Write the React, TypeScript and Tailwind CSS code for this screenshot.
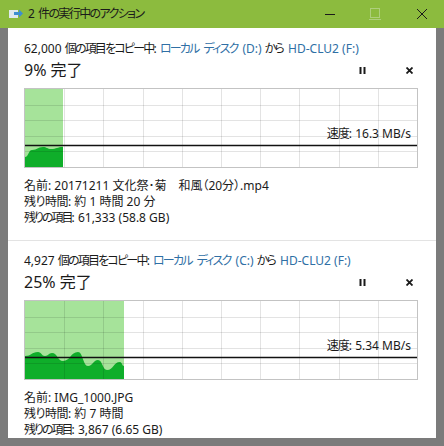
import React from "react";

type Pt = [number, number];

function smoothPath(pts: Pt[], bottom: number): string {
  let d = `M ${pts[0][0]} ${bottom} L ${pts[0][0]} ${pts[0][1]}`;
  for (let i = 0; i < pts.length - 1; i++) {
    const [x0, y0] = pts[i];
    const [x1, y1] = pts[i + 1];
    const mx = (x0 + x1) / 2;
    d += ` C ${mx} ${y0}, ${mx} ${y1}, ${x1} ${y1}`;
  }
  d += ` L ${pts[pts.length - 1][0]} ${bottom} Z`;
  return d;
}

function Chart({ fill, wave, speed }: { fill: number; wave: Pt[]; speed: string }) {
  const W = 392;
  const H = 78;
  const cols = 10;
  const rows = 5;
  const v: number[] = [];
  for (let i = 1; i < cols; i++) v.push(Math.round((W / cols) * i) + 0.5);
  const h: number[] = [];
  for (let i = 1; i < rows; i++) h.push(Math.round((H / rows) * i) + 0.5);
  return (
    <div className="relative w-[394px] h-[80px] border border-[#c3c3c3] bg-white">
      <svg width={W} height={H} className="block">
        <rect x={0} y={0} width={fill} height={H} fill="#a6e39a" />
        <path d={smoothPath(wave, H)} fill="#0fae2a" />
        {v.map((x) => (
          <line key={"v" + x} x1={x} y1={0} x2={x} y2={H} stroke="#000" strokeOpacity={0.11} strokeWidth={1} />
        ))}
        {h.map((y) => (
          <line key={"h" + y} x1={0} y1={y} x2={W} y2={y} stroke="#000" strokeOpacity={0.11} strokeWidth={1} />
        ))}
        <line x1={0} y1={56.5} x2={W} y2={56.5} stroke="#111" strokeWidth={1.5} />
      </svg>
      <div className="absolute right-[6px] bottom-[25px] text-[12px] leading-[16px] text-[#1a1a1a]">
        <span className="tracking-[-1px] mr-[1px]">速度:</span> {speed}
      </div>
    </div>
  );
}

function PauseIcon() {
  return (
    <svg width="7" height="7" viewBox="0 0 7 7">
      <rect x="0.5" y="0" width="2" height="7" fill="#1a1a1a" />
      <rect x="4.5" y="0" width="2" height="7" fill="#1a1a1a" />
    </svg>
  );
}

function CloseIcon() {
  return (
    <svg width="7" height="7" viewBox="0 0 7 7">
      <path d="M0.5 0.5 L6.5 6.5 M6.5 0.5 L0.5 6.5" stroke="#1a1a1a" strokeWidth="1.8" />
    </svg>
  );
}

function Section({
  count,
  drive,
  to,
  percent,
  fill,
  wave,
  speed,
  name,
  time,
  items,
}: {
  count: string;
  drive: string;
  to: string;
  percent: string;
  fill: number;
  wave: Pt[];
  speed: string;
  name: string;
  time: string;
  items: string;
}) {
  return (
    <div className="flex flex-col pl-[16px] pr-[18px]">
      <div className="text-[12px] leading-[16px] text-[#1a1a1a] whitespace-nowrap">
        {count} <span className="tracking-[-1.8px] mr-[1.8px]">個の項目をコピー中:</span>{" "}
        <span className="text-[#2f6fa5]">
          <span className="tracking-[-1.8px] mr-[1.8px]">ローカル</span>{" "}
          <span className="tracking-[-1.8px] mr-[1.8px]">ディスク</span> {drive}
        </span>{" "}
        <span className="tracking-[-1.8px] mr-[1.8px]">から</span>{" "}
        <span className="text-[#2f6fa5]">{to}</span>
      </div>
      <div className="flex items-center h-[24px] mt-[1px]">
        <div className="text-[16px] leading-[24px] text-[#1a1a1a] flex-1">{percent} 完了</div>
        <div className="flex items-center gap-[40px] mr-[5px] mt-[1px]">
          <PauseIcon />
          <CloseIcon />
        </div>
      </div>
      <div className="mt-[6px]">
        <Chart fill={fill} wave={wave} speed={speed} />
      </div>
      <div className="mt-[10px] text-[12px] leading-[16px] text-[#1a1a1a] whitespace-nowrap">
        <div>名前: {name}</div>
        <div>
          <span className="tracking-[-0.5px] mr-[0.5px]">残り時間:</span> {time}
        </div>
        <div>
          <span className="tracking-[-2px] mr-[2px]">残りの項目:</span> {items}
        </div>
      </div>
    </div>
  );
}

export default function App() {
  return (
    <div className="w-[444px] h-[446px] flex flex-col bg-[#7b7b7b] [font-family:'Noto_Sans','Noto_Sans_CJK_JP',sans-serif] [font-feature-settings:'palt'] overflow-hidden">
      <div className="h-[28px] bg-[#8cbb3e] flex items-center shrink-0">
        <svg width="16" height="14" viewBox="0 0 16 14" className="ml-[8px]">
          <rect x="1" y="3" width="9" height="8" fill="#dfe9ee" />
          <path d="M6 5 H11 V2.5 L15 6.5 L11 10.5 V8 H6 Z" fill="#3d8fd0" />
        </svg>
        <div className="ml-[4px] text-[12px] leading-[16px] text-[#1a1a1a] whitespace-nowrap">
          2 <span className="tracking-[-1.6px]">件の実行中のアクション</span>
        </div>
        <div className="flex-1" />
        <svg width="12" height="12" viewBox="0 0 12 12" className="mr-[32px]">
          <line x1="1" y1="6.5" x2="11" y2="6.5" stroke="#1a1a1a" strokeWidth="1" />
        </svg>
        <svg width="14" height="14" viewBox="0 0 14 14" className="mr-[34px]">
          <rect x="2.5" y="1.5" width="9" height="9" fill="none" stroke="#aecf7c" strokeWidth="1" />
          <line x1="1" y1="12.5" x2="13" y2="12.5" stroke="#aecf7c" strokeWidth="1" />
        </svg>
        <svg width="12" height="12" viewBox="0 0 12 12" className="mr-[16px]">
          <path d="M1 1 L11 11 M11 1 L1 11" stroke="#1a1a1a" strokeWidth="1" />
        </svg>
      </div>
      <div className="flex-1 px-[8px] pb-[8px]">
        <div className="h-full bg-white flex flex-col">
          <div className="pt-[13px]">
            <Section
              count="62,000"
              drive="(D:)"
              to="HD-CLU2 (F:)"
              percent="9%"
              fill={38}
              wave={[
                [0, 68],
                [7, 61],
                [18, 58],
                [26, 60],
                [38, 58],
              ]}
              speed="16.3 MB/s"
              name="20171211 文化祭･菊　和風（20分）.mp4"
              time="約 1 時間 20 分"
              items="61,333 (58.8 GB)"
            />
          </div>
          <div className="mt-[14px] h-px bg-[#e3e3e3]" />
          <div className="pt-[12px]">
            <Section
              count="4,927"
              drive="(C:)"
              to="HD-CLU2 (F:)"
              percent="25%"
              fill={99}
              wave={[
                [0, 55],
                [13, 51],
                [20, 55],
                [27, 52],
                [38, 60],
                [53, 51],
                [63, 65],
                [73, 59],
                [82, 69],
                [95, 61],
                [99, 65],
              ]}
              speed="5.34 MB/s"
              name="IMG_1000.JPG"
              time="約 7 時間"
              items="3,867 (6.65 GB)"
            />
          </div>
        </div>
      </div>
    </div>
  );
}
